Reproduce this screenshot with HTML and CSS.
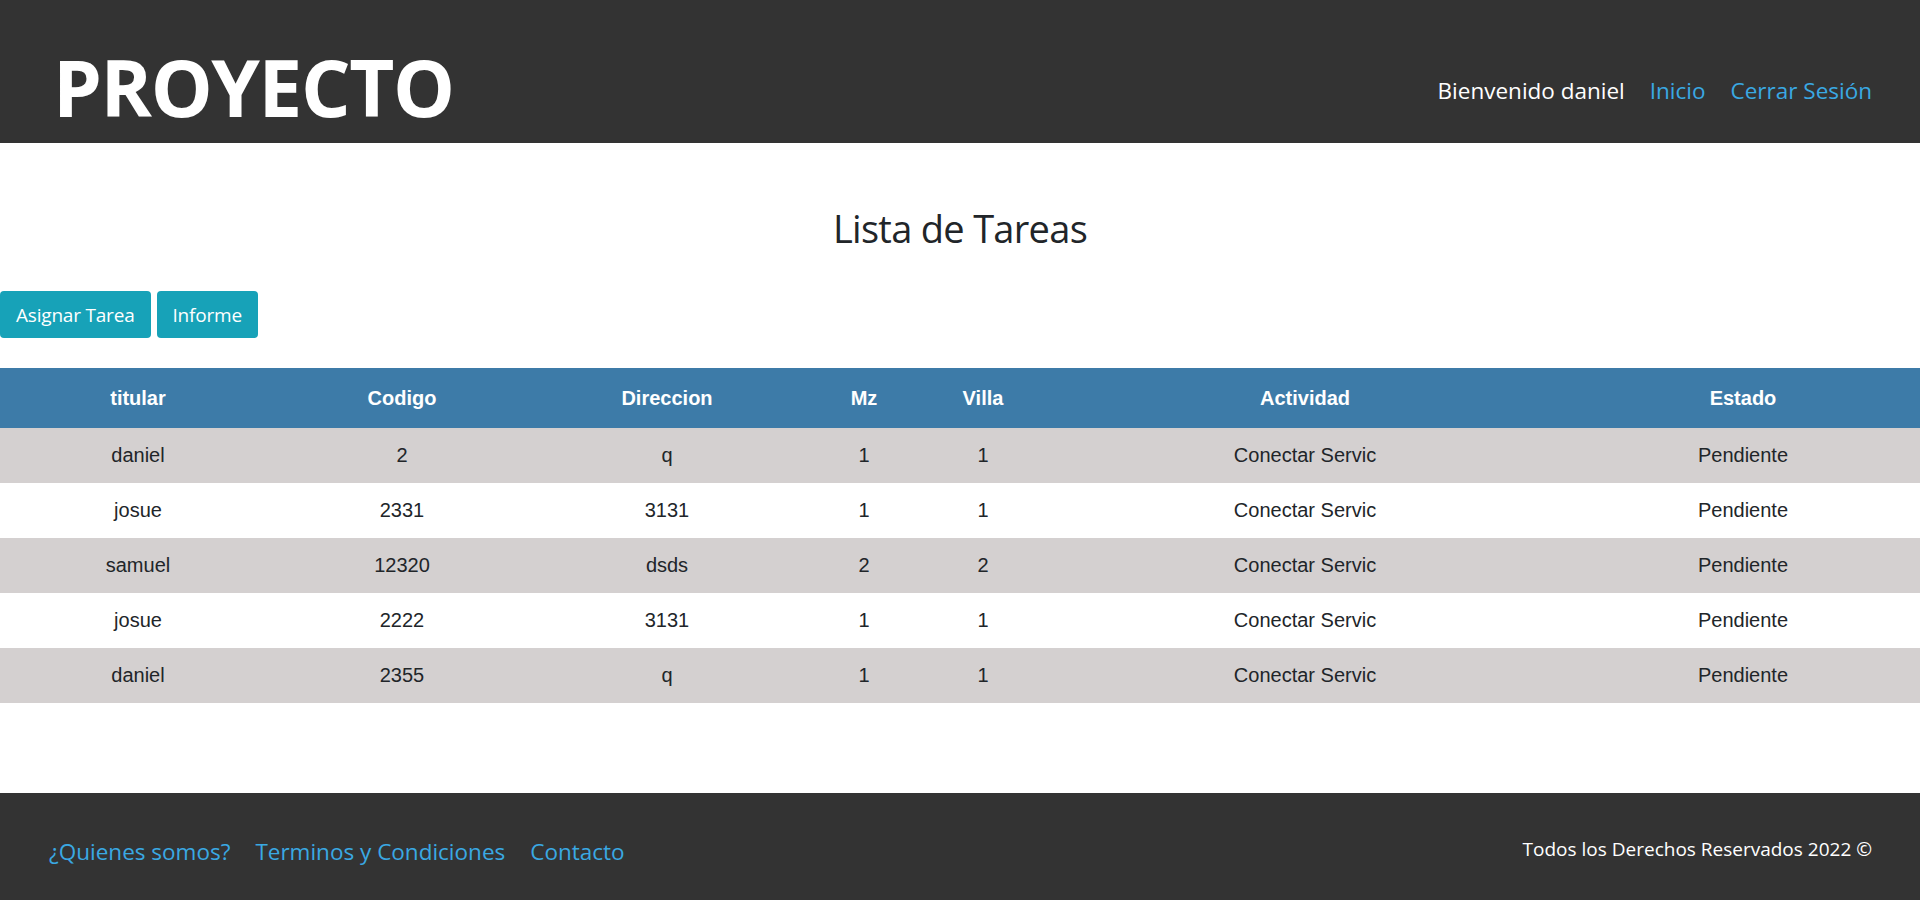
FILE: index.html
```html
<!DOCTYPE html>
<html lang="es">
<head>
<meta charset="utf-8">
<title>Lista de Tareas</title>
<link rel="stylesheet" href="styles.css">
</head>
<body>
<header class="site-header">
  <h1 class="brand">PROYECTO</h1>
  <nav class="top-nav">
    <span class="welcome">Bienvenido daniel</span>
    <a class="nav-link" href="#">Inicio</a>
    <a class="nav-link" href="#">Cerrar Sesión</a>
  </nav>
</header>
<main class="content">
  <h2 class="page-title">Lista de Tareas</h2>
  <div class="actions">
    <a class="btn" href="#">Asignar Tarea</a>
    <a class="btn" href="#">Informe</a>
  </div>
  <table class="tasks">
    <colgroup>
      <col class="c-titular"><col class="c-codigo"><col class="c-dir"><col class="c-mz"><col class="c-villa"><col class="c-act"><col class="c-estado">
    </colgroup>
    <thead>
      <tr><th>titular</th><th>Codigo</th><th>Direccion</th><th>Mz</th><th>Villa</th><th>Actividad</th><th>Estado</th></tr>
    </thead>
    <tbody>
      <tr><td>daniel</td><td>2</td><td>q</td><td>1</td><td>1</td><td>Conectar Servic</td><td>Pendiente</td></tr>
      <tr><td>josue</td><td>2331</td><td>3131</td><td>1</td><td>1</td><td>Conectar Servic</td><td>Pendiente</td></tr>
      <tr><td>samuel</td><td>12320</td><td>dsds</td><td>2</td><td>2</td><td>Conectar Servic</td><td>Pendiente</td></tr>
      <tr><td>josue</td><td>2222</td><td>3131</td><td>1</td><td>1</td><td>Conectar Servic</td><td>Pendiente</td></tr>
      <tr><td>daniel</td><td>2355</td><td>q</td><td>1</td><td>1</td><td>Conectar Servic</td><td>Pendiente</td></tr>
    </tbody>
  </table>
</main>
<footer class="site-footer">
  <nav class="footer-links">
    <a href="#">¿Quienes somos?</a>
    <a href="#">Terminos y Condiciones</a>
    <a href="#">Contacto</a>
  </nav>
  <p class="copy">Todos los Derechos Reservados 2022 ©</p>
</footer>
</body>
</html>
```

FILE: styles.css
```css
* { box-sizing: border-box; }
html, body { margin: 0; padding: 0; }
body {
  font-family: "Open Sans", "Noto Sans", sans-serif;
  color: #212529;
  background: #fff;
}
a { text-decoration: none; }

.site-header {
  background: #333333;
  height: 143px;
  padding: 40px 48px 0 53px;
  display: flex;
  justify-content: space-between;
  align-items: flex-start;
}
.brand {
  margin: 0;
  color: #fff;
  font-size: 78px;
  font-weight: 700;
  line-height: 94px;
  letter-spacing: -1.4px;
}
.top-nav {
  margin-top: 33px;
  display: flex;
  gap: 25px;
  font-size: 22.5px;
  line-height: 36px;
}
.welcome { color: #fff; }
.nav-link { color: #3aa9e3; }

.content { padding: 0; }
.page-title {
  margin: 62px 0 0;
  text-align: center;
  font-size: 38px;
  font-weight: 400;
  line-height: 46px;
  letter-spacing: -0.7px;
  color: #212529;
}
.actions {
  margin-top: 40px;
  display: flex;
  gap: 6px;
}
.btn {
  display: inline-block;
  height: 47px;
  padding: 2px 16px 0;
  background: #17a2b8;
  color: #fff;
  border-radius: 4px;
  font-size: 19px;
  letter-spacing: -0.2px;
  line-height: 45px;
}

.tasks {
  margin-top: 30px;
  width: 100%;
  border-collapse: collapse;
  table-layout: fixed;
  font-family: "Liberation Sans", Arial, sans-serif;
  font-size: 20px;
}
.c-titular { width: 276px; }
.c-codigo { width: 252px; }
.c-dir { width: 278px; }
.c-mz { width: 116px; }
.c-villa { width: 122px; }
.c-act { width: 522px; }
.c-estado { width: 354px; }
.tasks th {
  background: #3d7ba8;
  color: #fff;
  font-weight: 700;
  height: 60px;
  padding: 0;
  text-align: center;
}
.tasks td {
  height: 55px;
  padding: 0;
  text-align: center;
  color: #212529;
}
.tasks tbody tr:nth-child(odd) td { background: #d4d0d0; }

.site-footer {
  margin-top: 90px;
  background: #333333;
  padding: 41px 48px 41px 49px;
  display: flex;
  justify-content: space-between;
  align-items: flex-start;
}
.footer-links {
  display: flex;
  gap: 25px;
  font-size: 22.5px;
  line-height: 36px;
}
.footer-links a { color: #3aa9e3; }
.copy {
  margin: 0;
  color: #fff;
  font-size: 19px;
  line-height: 30px;
}
```
